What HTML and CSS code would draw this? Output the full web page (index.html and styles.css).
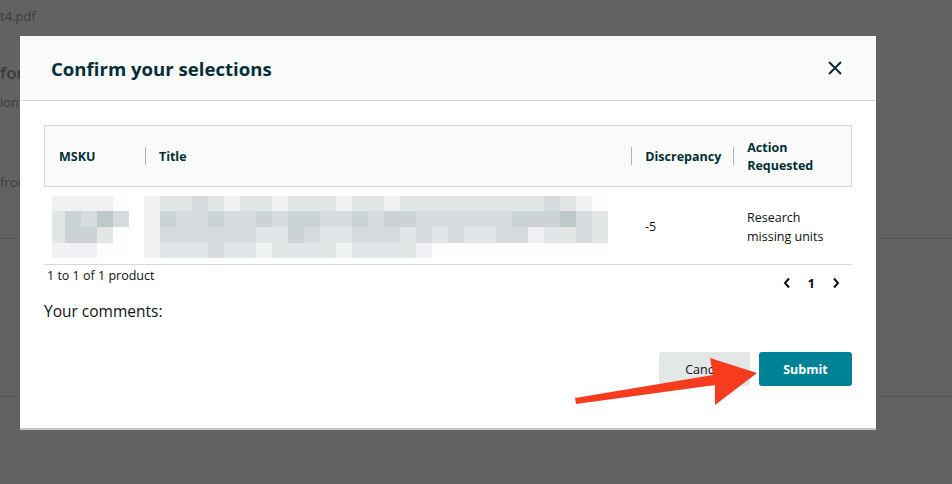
FILE: index.html
```html
<!DOCTYPE html>
<html lang="en">
<head>
    <meta charset="UTF-8">
    <meta name="viewport" content="width=device-width, initial-scale=1.0">
    <title>Confirm your selections</title>
    <link rel="stylesheet" href="styles.css">
</head>
<body>
    <div class="page">
        <p class="file-name">t4.pdf</p>
        <h2 class="page-heading">for</h2>
        <p class="page-sub">ion</p>
        <p class="page-from">fror</p>
        <hr class="page-line">
        <hr class="page-line low">
    </div>

    <div class="overlay">
        <div class="modal">
            <div class="modal-header">
                <h1>Confirm your selections</h1>
                <button class="close-btn" aria-label="Close">
                    <svg width="16" height="16" viewBox="0 0 16 16"><path d="M2 2L14 14M14 2L2 14" stroke="#0f2b35" stroke-width="2" fill="none"/></svg>
                </button>
            </div>
            <div class="modal-body">
                <div class="table">
                    <div class="thead">
                        <div class="th col-msku">MSKU</div>
                        <div class="th col-title"><span class="sep"></span>Title</div>
                        <div class="th col-disc"><span class="sep"></span>Discrepancy</div>
                        <div class="th col-action"><span class="sep"></span>Action<br>Requested</div>
                    </div>
                    <div class="trow">
                        <div class="td col-msku">
                            <div class="mosaic msku-blur">
                                <i class="s1"></i><i class="s1"></i><i class="s1"></i><i class="s1"></i><i class="s0"></i>
                                <i class="s2"></i><i class="s4"></i><i class="s3"></i><i class="s5"></i><i class="s3"></i>
                                <i class="s2"></i><i class="s4"></i><i class="s4"></i><i class="s2"></i><i class="s0"></i>
                                <i class="s1"></i><i class="s1"></i><i class="s1"></i><i class="s0"></i><i class="s0"></i>
                            </div>
                        </div>
                        <div class="td col-title">
                            <div class="mosaic title-blur">
                                <i class="s1"></i><i class="s2"></i><i class="s2"></i><i class="s3"></i><i class="s2"></i><i class="s1"></i><i class="s2"></i><i class="s2"></i><i class="s1"></i><i class="s2"></i><i class="s2"></i><i class="s2"></i><i class="s1"></i><i class="s2"></i><i class="s2"></i><i class="s1"></i><i class="s2"></i><i class="s2"></i><i class="s2"></i><i class="s2"></i><i class="s2"></i><i class="s2"></i><i class="s2"></i><i class="s2"></i><i class="s2"></i><i class="s3"></i><i class="s2"></i><i class="s1"></i><i class="s0"></i>
                                <i class="s1"></i><i class="s4"></i><i class="s3"></i><i class="s3"></i><i class="s4"></i><i class="s3"></i><i class="s3"></i><i class="s4"></i><i class="s3"></i><i class="s4"></i><i class="s4"></i><i class="s3"></i><i class="s3"></i><i class="s4"></i><i class="s3"></i><i class="s4"></i><i class="s4"></i><i class="s3"></i><i class="s3"></i><i class="s3"></i><i class="s3"></i><i class="s3"></i><i class="s3"></i><i class="s4"></i><i class="s4"></i><i class="s4"></i><i class="s5"></i><i class="s3"></i><i class="s2"></i>
                                <i class="s1"></i><i class="s3"></i><i class="s3"></i><i class="s3"></i><i class="s3"></i><i class="s3"></i><i class="s3"></i><i class="s2"></i><i class="s2"></i><i class="s4"></i><i class="s3"></i><i class="s2"></i><i class="s2"></i><i class="s3"></i><i class="s3"></i><i class="s3"></i><i class="s2"></i><i class="s3"></i><i class="s2"></i><i class="s3"></i><i class="s2"></i><i class="s2"></i><i class="s3"></i><i class="s3"></i><i class="s1"></i><i class="s2"></i><i class="s2"></i><i class="s3"></i><i class="s2"></i>
                                <i class="s1"></i><i class="s2"></i><i class="s2"></i><i class="s2"></i><i class="s3"></i><i class="s2"></i><i class="s2"></i><i class="s1"></i><i class="s2"></i><i class="s2"></i><i class="s2"></i><i class="s2"></i><i class="s1"></i><i class="s2"></i><i class="s2"></i><i class="s2"></i><i class="s2"></i><i class="s1"></i><i class="s0"></i><i class="s0"></i><i class="s0"></i><i class="s0"></i><i class="s0"></i><i class="s0"></i><i class="s0"></i><i class="s0"></i><i class="s0"></i><i class="s0"></i><i class="s0"></i>
                            </div>
                        </div>
                        <div class="td col-disc">-5</div>
                        <div class="td col-action">Research<br>missing units</div>
                    </div>
                </div>
                <div class="table-footer">
                    <span class="count">1 to 1 of 1 product</span>
                    <div class="pager">
                        <svg width="8" height="12" viewBox="0 0 8 12"><path d="M6 1.5L2 6L6 10.5" stroke="#0f1111" stroke-width="2" fill="none"/></svg>
                        <span class="page-num">1</span>
                        <svg width="8" height="12" viewBox="0 0 8 12"><path d="M2 1.5L6 6L2 10.5" stroke="#0f1111" stroke-width="2" fill="none"/></svg>
                    </div>
                </div>
                <p class="comments">Your comments:</p>
                <div class="actions">
                    <button class="btn btn-cancel">Cancel</button>
                    <button class="btn btn-submit">Submit</button>
                </div>
            </div>
        </div>
    </div>

    <svg class="arrow" width="220" height="80" viewBox="0 0 220 80">
        <polygon points="15,58 153,35 150,18 197,33 155,65 155,45 16,64" fill="#f63b1f"/>
    </svg>
</body>
</html>
```

FILE: styles.css
```css
body {
    margin: 0;
    background-color: #626262;
    font-family: "Open Sans", "Noto Sans", Arial, sans-serif;
    color: #3b3b3b;
    height: 484px;
    overflow: hidden;
}
.page {
    padding-top: 7px;
    white-space: nowrap;
}
.page p, .page h2 {
    margin: 0;
}
.file-name {
    font-size: 13px;
    line-height: 18px;
}
.page-heading {
    font-size: 17px;
    font-weight: 600;
    line-height: 22px;
    margin-top: 37px !important;
}
.page-sub {
    font-size: 13px;
    line-height: 18px;
    margin-top: 9px !important;
}
.page-from {
    font-size: 13px;
    line-height: 18px;
    margin-top: 62px !important;
}
.page-line {
    border: none;
    border-top: 1px solid #555;
    margin: 47px 0 0;
}
.page-line.low {
    margin-top: 157px;
}

.overlay {
    position: fixed;
    top: 0;
    left: 0;
    right: 0;
    bottom: 0;
    padding: 36px 0 0 20px;
}
.modal {
    width: 856px;
    background: #fff;
    border-bottom: 2px solid #c8c8c8;
    color: #0f1111;
}
.modal-header {
    height: 64px;
    background: #fafafa;
    border-bottom: 1px solid #d5d9d9;
    display: flex;
    align-items: center;
    justify-content: space-between;
    padding: 0 33px 0 31px;
}
.modal-header h1 {
    margin: 0;
    font-size: 18.6px;
    font-weight: 700;
    color: #002f36;
}
.close-btn {
    background: none;
    border: none;
    padding: 0;
    display: flex;
}
.modal-body {
    padding: 24px 24px 42px;
}
.table {
    width: 808px;
}
.thead {
    display: flex;
    background: #fafafa;
    border: 1px solid #d5d9d9;
    box-sizing: border-box;
    height: 62px;
}
.th {
    position: relative;
    display: flex;
    align-items: center;
    font-size: 12.5px;
    font-weight: 700;
    line-height: 18px;
    color: #002f36;
    padding: 2px 0 0 14px;
    box-sizing: border-box;
}
.sep {
    position: absolute;
    left: 0;
    top: 21px;
    height: 18px;
    border-left: 1px solid #aab7b8;
}
.col-msku { width: 100px; }
.col-title { width: 487px; }
.col-disc { width: 102px; }
.col-action { width: 118px; }
.trow {
    display: flex;
    height: 78px;
    border-bottom: 1px solid #d5d9d9;
    box-sizing: border-box;
}
.td {
    display: flex;
    align-items: center;
    font-size: 12.5px;
    line-height: 19px;
    padding: 2px 0 0 14px;
    box-sizing: border-box;
}
.trow .col-msku { padding-left: 8px; }
.trow .col-title { padding-left: 0; }
.mosaic {
    display: grid;
    grid-template-rows: 15px 16px 16px 15px;
}
.msku-blur {
    grid-template-columns: 13px 16px 16px 16px 16px;
}
.title-blur {
    grid-template-columns: repeat(29, 16px);
}
.mosaic i { display: block; }
.s0 { background: #fdfdfd; }
.s1 { background: #eff1f2; }
.s2 { background: #e2e6e7; }
.s3 { background: #d6dcdd; }
.s4 { background: #cbd3d5; }
.s5 { background: #bec9cb; }

.table-footer {
    display: flex;
    justify-content: space-between;
    align-items: flex-start;
}
.count {
    font-size: 12.5px;
    line-height: 18px;
    padding: 2px 0 0 3px;
}
.pager {
    display: flex;
    align-items: center;
    gap: 17px;
    margin-top: 10px;
    padding-right: 12px;
}
.page-num {
    font-size: 13px;
    font-weight: 700;
    line-height: 16px;
}
.comments {
    margin: 9px 0 0;
    font-size: 15.5px;
    line-height: 22px;
}
.actions {
    display: flex;
    justify-content: flex-end;
    gap: 9px;
    margin-top: 30px;
}
.btn {
    height: 34px;
    border: none;
    border-radius: 3px;
    font-family: inherit;
    font-size: 12.5px;
    padding: 0;
}
.btn-cancel {
    width: 91px;
    background: #e3e7e8;
    color: #0f1111;
}
.btn-submit {
    width: 93px;
    background: #008296;
    color: #fff;
    font-weight: 700;
}
.arrow {
    position: fixed;
    left: 560px;
    top: 340px;
}
```
